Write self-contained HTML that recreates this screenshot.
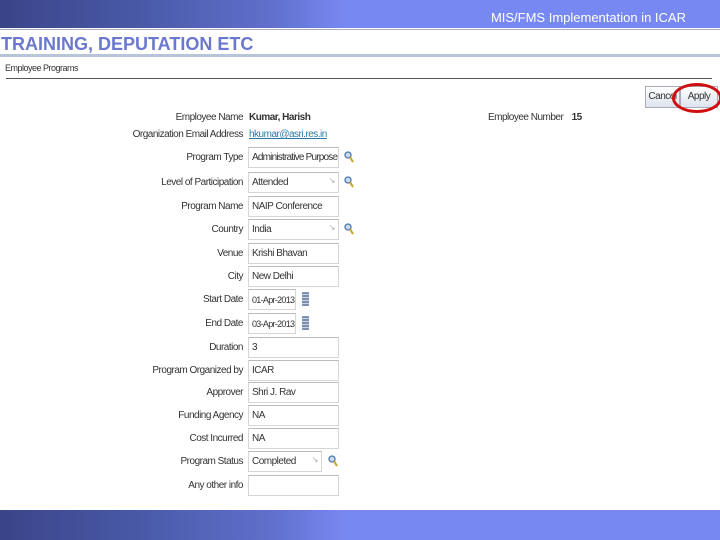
<!DOCTYPE html><html><head><style>
body{margin:0;width:720px;height:540px;position:relative;background:#fff;font-family:"Liberation Sans",sans-serif;overflow:hidden}
.bar{position:absolute;left:0;width:720px;background:linear-gradient(90deg,#3a4488 0%,#4a5aa8 20%,#6070cc 38%,#7888f2 48%,#7888f2 100%)}
.l{position:absolute;right:477px;font-size:10px;letter-spacing:-0.5px;color:#333;white-space:nowrap}
.i{position:absolute;left:248px;width:91px;height:21px;border:1px solid #d6d6d6;border-top-color:#bbb;font-size:10px;letter-spacing:-0.5px;color:#333;line-height:20px;padding-left:3px;box-sizing:border-box;white-space:nowrap;overflow:hidden}
.mg{position:absolute;width:10px;height:12px}
.cal{position:absolute;width:7px;height:14px;background:repeating-linear-gradient(#7d8fae 0 2px,#c8d2e4 2px 3px);border-radius:1px}
.arr{position:absolute;right:3px;bottom:1px;font-size:8px;color:#aaa}
</style></head><body>
<div class="bar" style="top:0;height:28px"></div>
<div style="position:absolute;right:34px;top:10px;font-size:13px;color:#fff">MIS/FMS Implementation in ICAR</div>
<div style="position:absolute;left:0;top:29px;width:720px;height:1px;background:#aab"></div>
<div style="position:absolute;left:1px;top:34px;font-weight:bold;font-size:18px;color:#6b78d0">TRAINING, DEPUTATION ETC</div>
<div style="position:absolute;left:0;top:54px;width:720px;height:3px;background:#b8c4d8"></div>
<div style="position:absolute;left:5px;top:63px;font-size:9px;letter-spacing:-0.5px;color:#333">Employee Programs</div>
<div style="position:absolute;left:6px;top:78px;width:706px;height:1px;background:#555"></div>
<div style="position:absolute;left:645px;top:86px;width:33px;height:20px;border:1px solid #aab;background:linear-gradient(#fff,#dde4ee);font-size:10px;letter-spacing:-0.5px;text-align:center;line-height:20px;color:#333">Cancel</div>
<div style="position:absolute;left:680px;top:86px;width:36px;height:20px;border:1px solid #aab;background:linear-gradient(#fff,#dde4ee);font-size:10px;letter-spacing:-0.5px;text-align:center;line-height:20px;color:#333">Apply</div>
<div style="position:absolute;left:672px;top:83px;width:44px;height:24px;border:3px solid #d01010;border-radius:50%"></div>
<div style="position:absolute;left:488px;top:112px;font-size:10px;letter-spacing:-0.5px;color:#333">Employee Number <b style="margin-left:6px">15</b></div>
<div class="l" style="top:112px">Employee Name</div><div style="position:absolute;left:249px;top:112px;font-size:10px;letter-spacing:-0.5px;font-weight:bold;color:#333">Kumar, Harish</div>
<div class="l" style="top:129px">Organization Email Address</div><div style="position:absolute;left:249px;top:129px;font-size:10px;letter-spacing:-0.5px;color:#2a7aa8;text-decoration:underline">hkumar@asri.res.in</div>

<div class="l" style="top:152px">Program Type</div><div class="i" style="top:147px;letter-spacing:-0.8px">Administrative Purpose<span class="arr">↘</span></div>
<div class="l" style="top:177px">Level of Participation</div><div class="i" style="top:172px">Attended<span class="arr">↘</span></div>
<div class="l" style="top:201px">Program Name</div><div class="i" style="top:196px">NAIP Conference</div>
<div class="l" style="top:224px">Country</div><div class="i" style="top:219px">India<span class="arr">↘</span></div>
<div class="l" style="top:248px">Venue</div><div class="i" style="top:243px">Krishi Bhavan</div>
<div class="l" style="top:271px">City</div><div class="i" style="top:266px">New Delhi</div>
<div class="l" style="top:294px">Start Date</div><div class="i" style="top:289px;width:48px;font-size:9px;letter-spacing:-0.7px">01-Apr-2013</div>
<div class="l" style="top:318px">End Date</div><div class="i" style="top:313px;width:48px;font-size:9px;letter-spacing:-0.7px">03-Apr-2013</div>
<div class="l" style="top:342px">Duration</div><div class="i" style="top:337px">3</div>
<div class="l" style="top:365px">Program Organized by</div><div class="i" style="top:360px">ICAR</div>
<div class="l" style="top:387px">Approver</div><div class="i" style="top:382px">Shri J. Rav</div>
<div class="l" style="top:410px">Funding Agency</div><div class="i" style="top:405px">NA</div>
<div class="l" style="top:433px">Cost Incurred</div><div class="i" style="top:428px">NA</div>
<div class="l" style="top:456px">Program Status</div><div class="i" style="top:451px;width:74px">Completed<span class="arr">↘</span></div>
<div class="l" style="top:480px">Any other info</div><div class="i" style="top:475px"></div>

<svg class="mg" style="left:344px;top:151px" viewBox="0 0 10 12"><circle cx="4" cy="4" r="3" fill="#cde" stroke="#4a78b0" stroke-width="1.3"/><path d="M6 6l3 5" stroke="#c9a020" stroke-width="2"/></svg>
<svg class="mg" style="left:344px;top:176px" viewBox="0 0 10 12"><circle cx="4" cy="4" r="3" fill="#cde" stroke="#4a78b0" stroke-width="1.3"/><path d="M6 6l3 5" stroke="#c9a020" stroke-width="2"/></svg>
<svg class="mg" style="left:344px;top:223px" viewBox="0 0 10 12"><circle cx="4" cy="4" r="3" fill="#cde" stroke="#4a78b0" stroke-width="1.3"/><path d="M6 6l3 5" stroke="#c9a020" stroke-width="2"/></svg>
<svg class="mg" style="left:328px;top:455px" viewBox="0 0 10 12"><circle cx="4" cy="4" r="3" fill="#cde" stroke="#4a78b0" stroke-width="1.3"/><path d="M6 6l3 5" stroke="#c9a020" stroke-width="2"/></svg>
<div class="cal" style="left:302px;top:292px"></div>
<div class="cal" style="left:302px;top:316px"></div>
<div class="bar" style="top:510px;height:30px"></div>
</body></html>
